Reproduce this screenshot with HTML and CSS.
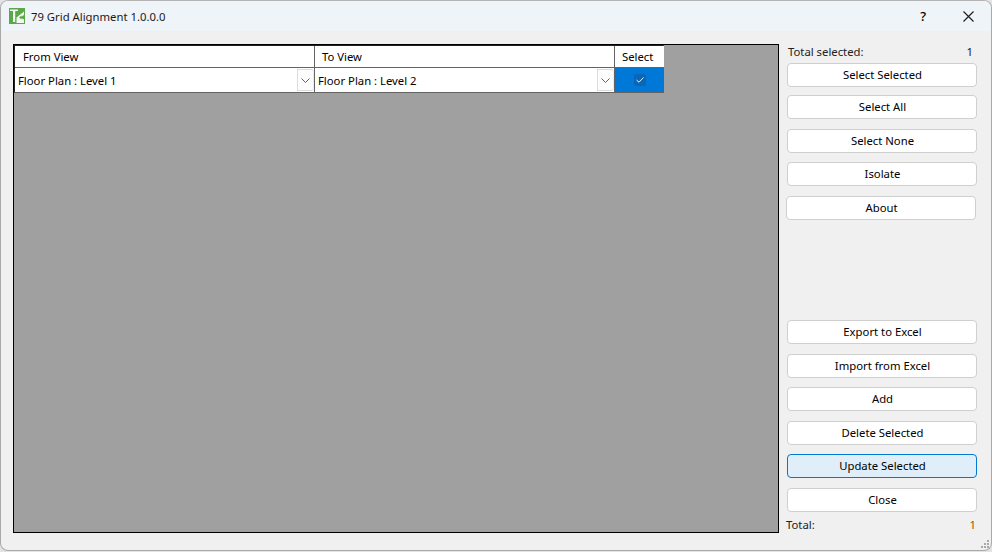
FILE: index.html
```html
<!DOCTYPE html>
<html lang="en">
<head>
<meta charset="utf-8">
<title>79 Grid Alignment 1.0.0.0</title>
<link rel="stylesheet" href="styles.css">
</head>
<body>
<div class="window">
  <header class="titlebar">
    <svg class="logo" width="16" height="16" viewBox="0 0 16 16">
      <rect width="16" height="16" fill="#5aa84a"/>
      <path d="M1 1.500H9V3H6.200V14H4V3H1Z" fill="#f4f8f2"/>
      <path d="M7.500 9.500L15 3.500V7L11 9.500L15 11.500V15H7.500Z" fill="#f4f8f2"/>
      <path d="M10 9.500L12.500 7.500V11.500Z" fill="#5aa84a"/>
    </svg>
    <span class="title">79 Grid Alignment 1.0.0.0</span>
    <span class="help">?</span>
    <svg class="close" width="11" height="11" viewBox="0 0 11 11"><path d="M.5.500L10.500 10.500M10.500.500L.5 10.500" stroke="#1a1a1a" stroke-width="1.100" fill="none"/></svg>
  </header>
  <main class="content">
    <section class="grid-panel">
      <div class="table">
        <div class="cell head from">From View</div>
        <div class="cell head to">To View</div>
        <div class="cell head sel">Select</div>
        <div class="cell combo">
          <span class="combo-text">Floor Plan : Level 1</span>
          <span class="arrow"><svg width="9" height="5" viewBox="0 0 9 5"><path d="M.5.500L4.500 4.500L8.500.500" stroke="#606060" fill="none"/></svg></span>
        </div>
        <div class="cell combo">
          <span class="combo-text">Floor Plan : Level 2</span>
          <span class="arrow"><svg width="9" height="5" viewBox="0 0 9 5"><path d="M.5.500L4.500 4.500L8.500.500" stroke="#606060" fill="none"/></svg></span>
        </div>
        <div class="cell check-cell">
          <span class="check"><svg width="8" height="6" viewBox="0 0 8 6"><path d="M.5 3L3 5.200L7.500.500" stroke="#e8f2fb" fill="none"/></svg></span>
        </div>
      </div>
    </section>
    <aside class="side">
      <div class="stat top"><span>Total selected:</span><span>1</span></div>
      <button class="btn">Select Selected</button>
      <button class="btn g8">Select All</button>
      <button class="btn g10">Select None</button>
      <button class="btn g9">Isolate</button>
      <button class="btn g10 shift">About</button>
      <div class="spacer"></div>
      <button class="btn">Export to Excel</button>
      <button class="btn g10">Import from Excel</button>
      <button class="btn g9">Add</button>
      <button class="btn g10">Delete Selected</button>
      <button class="btn g9 active">Update Selected</button>
      <button class="btn g10">Close</button>
      <div class="stat bottom"><span>Total:</span><span class="orange">1</span></div>
    </aside>
  </main>
  <svg class="grip" width="10" height="10" viewBox="0 0 10 10"><path d="M7 1h2v2H7zM4 4h2v2H4zM7 4h2v2H7zM1 7h2v2H1zM4 7h2v2H4zM7 7h2v2H7z" fill="#a8a8a8"/></svg>
</div>
</body>
</html>
```
FILE: styles.css
```css
* { box-sizing: border-box; }
html, body { margin: 0; height: 100%; background: #e4e4e4; overflow: hidden; }
body { font-family: "Noto Sans", "Open Sans", sans-serif; font-size: 11.300px; color: #000; }

.window {
  position: relative;
  width: 992px;
  height: 551px;
  background: #f0f0f0;
  border: 1px solid #a9a9a9;
  border-top-color: #b4b4b4;
  border-radius: 8px;
  display: flex;
  flex-direction: column;
  overflow: hidden;
}

.titlebar {
  flex: none;
  height: 30px;
  background: #eff4f9;
  display: flex;
  align-items: center;
  padding: 0 17px 0 8px;
}
.logo { flex: none; margin-top: -1px; }
.title { margin-left: 6px; flex: 1; white-space: nowrap; color: #1a1a1a; }
.help { font-size: 13px; font-weight: 500; margin-right: 37px; }
.close { flex: none; }

.content {
  flex: 1;
  display: flex;
  padding: 13px 14px 17px 12px;
  min-height: 0;
}

.grid-panel {
  flex: none;
  width: 766px;
  background: #a0a0a0;
  border: 1px solid #000;
}

.table {
  display: grid;
  grid-template-columns: 300px 300px 49px;
  grid-template-rows: 22px 24px;
  width: 650px;
  border-bottom: 1px solid #646464;
  border-right: 1px solid #646464;
  border-top: 1px solid #222;
  border-left: 1px solid #222;
  background: #fff;
}
.cell { display: flex; align-items: center; border-right: 1px solid #646464; white-space: nowrap; min-width: 0; }
.cell:nth-child(3n) { border-right: 0; }
.head { background: #fff; border-bottom: 1px solid #646464; }
.from { padding-left: 8px; }
.to { padding-left: 7px; }
.sel { padding-left: 7px; }

.combo { background: #fff; padding-left: 3px; }
.combo-text { flex: 1; }
.arrow {
  flex: none;
  width: 17px;
  height: 22px;
  display: flex;
  align-items: center;
  justify-content: center;
  background: #fdfdfd;
  border: 1px solid #dcdcdc;
  border-right-color: #ececec;
  border-radius: 0 3px 3px 0;
}

.check-cell { background: #0078d7; justify-content: center; }
.check {
  width: 12px;
  height: 12px;
  border-radius: 2px;
  background: #0a66b8;
  display: flex;
  align-items: center;
  justify-content: center;
}

.side {
  flex: 1;
  margin-left: 8px;
  display: flex;
  flex-direction: column;
  min-width: 0;
}
.stat { display: flex; justify-content: space-between; height: 16px; align-items: center; flex: none; color: #222; }
.stat.top { margin: -1px 0 4px 1px; padding-right: 4px; }
.stat.bottom { margin: 4px 0 0 -1px; padding-right: 1px; height: 17px; }
.orange { color: #9a5a00; }

.btn {
  flex: none;
  width: 190px;
  height: 24px;
  padding: 0 0 1px 1px;
  font: inherit;
  color: #000;
  background: #fff;
  border: 1px solid #cfcfcf;
  border-radius: 4px;
}
.g8 { margin-top: 8px; }
.g9 { margin-top: 9px; }
.g10 { margin-top: 10px; }
.shift { margin-left: -1px; }
.spacer { flex: 1; }
.active { background: #e0eefa; border-color: #0078d4; }

.grip { position: absolute; right: 1px; bottom: 1px; }
```
